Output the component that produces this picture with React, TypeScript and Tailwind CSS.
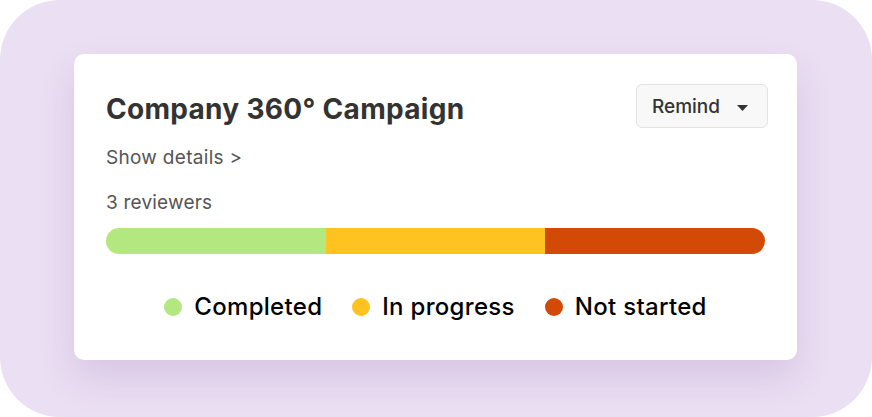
const segments = [
  { label: "Completed", color: "bg-[#b3e77f]" },
  { label: "In progress", color: "bg-[#fec320]" },
  { label: "Not started", color: "bg-[#d24a05]" },
];

export default function App() {
  return (
    <div className="w-[872px] h-[417px] bg-white font-['Inter',sans-serif]">
      <div className="w-full h-full rounded-[60px] bg-[#ebdff3] pl-[74px] pr-[75px] pt-[54px]">
        <div className="h-[306px] rounded-[10px] bg-white px-[32px] pt-[30px] shadow-[0_18px_36px_rgba(110,70,150,0.16)]">
          <div className="flex items-center justify-between">
            <h1 className="text-[28px] leading-[34px] font-bold tracking-[0.3px] text-[#333333] mt-[5px]">
              Company 360° Campaign
            </h1>
            <button className="flex items-center gap-[17px] h-[44px] w-[132px] mr-[-3px] pl-[15px] pt-[2px] rounded-[6px] border border-[#e3e3e3] bg-[#f8f8f8] text-[19px] font-medium text-[#333333]">
              Remind
              <svg width="11" height="6" viewBox="0 0 11 6" className="mt-[1px]">
                <path d="M0 0 L11 0 L5.5 6 Z" fill="#333333" />
              </svg>
            </button>
          </div>
          <div className="mt-[18px] text-[19px] leading-[24px] tracking-[0.3px] text-[#555555]">
            Show details &gt;
          </div>
          <div className="mt-[21px] text-[19px] leading-[24px] tracking-[0.2px] text-[#555555]">
            3 reviewers
          </div>
          <div className="mt-[13px] flex h-[26px] overflow-hidden rounded-full">
            {segments.map((s) => (
              <div key={s.label} className={`flex-1 ${s.color}`} />
            ))}
          </div>
          <div className="mt-[38px] flex items-center justify-center gap-[30px]">
            {segments.map((s) => (
              <div key={s.label} className="flex items-center gap-[12px]">
                <span className={`w-[18px] h-[18px] rounded-full ${s.color}`} />
                <span className="text-[24px] leading-[30px] font-medium tracking-[0.3px] text-black">
                  {s.label}
                </span>
              </div>
            ))}
          </div>
        </div>
      </div>
    </div>
  );
}
